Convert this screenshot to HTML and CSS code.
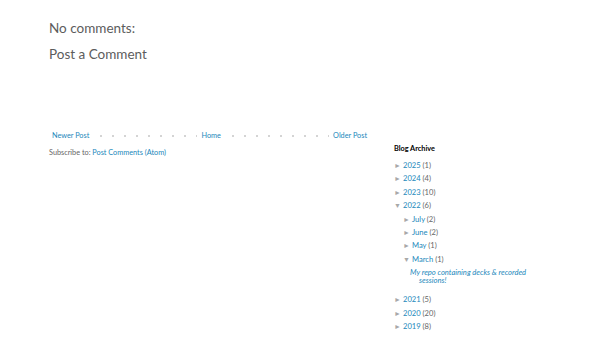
FILE: index.html
```html
<!DOCTYPE html>
<html lang="en">
<head>
    <meta charset="UTF-8">
    <title>Blog post</title>
    <link rel="stylesheet" href="styles.css">
</head>
<body>
    <div class="page">
        <div class="main">
            <div class="comments">
                <h4>No comments:</h4>
                <h3>Post a Comment</h3>
            </div>

            <div class="pager">
                <a class="newer" href="#">Newer Post</a>
                <span class="dots"></span>
                <a class="home" href="#">Home</a>
                <span class="dots"></span>
                <a class="older" href="#">Older Post</a>
            </div>
            <div class="feed">Subscribe to: <a href="#">Post Comments (Atom)</a></div>
        </div>

        <div class="sidebar">
            <h2>Blog Archive</h2>
            <ul class="archive">
                <li><span class="toggle">&#9658;</span><a href="#">2025</a> <span class="count">(1)</span></li>
                <li><span class="toggle">&#9658;</span><a href="#">2024</a> <span class="count">(4)</span></li>
                <li><span class="toggle">&#9658;</span><a href="#">2023</a> <span class="count">(10)</span></li>
                <li><span class="toggle">&#9660;</span><a href="#">2022</a> <span class="count">(6)</span>
                    <ul class="archive">
                        <li><span class="toggle">&#9658;</span><a href="#">July</a> <span class="count">(2)</span></li>
                        <li><span class="toggle">&#9658;</span><a href="#">June</a> <span class="count">(2)</span></li>
                        <li><span class="toggle">&#9658;</span><a href="#">May</a> <span class="count">(1)</span></li>
                        <li><span class="toggle">&#9660;</span><a href="#">March</a> <span class="count">(1)</span>
                            <ul class="posts">
                                <li><a href="#">My repo containing decks &amp; recorded sessions!</a></li>
                            </ul>
                        </li>
                    </ul>
                </li>
                <li><span class="toggle">&#9658;</span><a href="#">2021</a> <span class="count">(5)</span></li>
                <li><span class="toggle">&#9658;</span><a href="#">2020</a> <span class="count">(20)</span></li>
                <li><span class="toggle">&#9658;</span><a href="#">2019</a> <span class="count">(8)</span></li>
            </ul>
        </div>
    </div>
</body>
</html>
```

FILE: styles.css
```css
:root {
    --link-color: #2288bb;
    --text-color: #666666;
}

body {
    margin: 0;
    background-color: #ffffff;
    color: var(--text-color);
    font-family: Lato, "Liberation Sans", sans-serif;
    font-size: 7.3px;
}

a {
    color: var(--link-color);
    text-decoration: none;
}

.page {
    display: flex;
    padding-left: 49px;
}

.main {
    width: 318px;
}

.comments h4,
.comments h3 {
    margin: 0;
    font-weight: normal;
    font-size: 13.5px;
    line-height: 18px;
    color: #5c5c5c;
}

.comments h4 {
    padding-top: 19px;
}

.comments h3 {
    padding-top: 8px;
    height: 86px;
}

.pager {
    display: flex;
    align-items: center;
    gap: 4px;
    padding-left: 3px;
    line-height: 10px;
}

.dots {
    flex: 1;
    height: 4px;
    background-image: radial-gradient(circle, #d4d4d4 1.1px, transparent 1.5px);
    background-size: 12px 4px;
    background-position: 2px 0;
}

.feed {
    margin-top: 7px;
}

.sidebar {
    margin-left: 27px;
    padding-top: 144px;
    width: 140px;
}

.sidebar h2 {
    margin: 0 0 5px;
    font-size: 7.3px;
    line-height: 10px;
    color: #000000;
}

.archive,
.posts {
    list-style: none;
    margin: 0;
    padding: 0;
}

.archive li {
    line-height: 13.4px;
    font-size: 7.6px;
}

.archive .archive {
    padding-left: 9px;
}

.toggle {
    display: inline-block;
    width: 9px;
    font-size: 7px;
    line-height: 1;
    color: #a8a8a8;
}

.posts {
    padding: 0 0 9px 7px;
}

.posts li {
    line-height: 8px;
    padding: 2px 0 0 9px;
    text-indent: -9px;
    font-style: italic;
}
```
